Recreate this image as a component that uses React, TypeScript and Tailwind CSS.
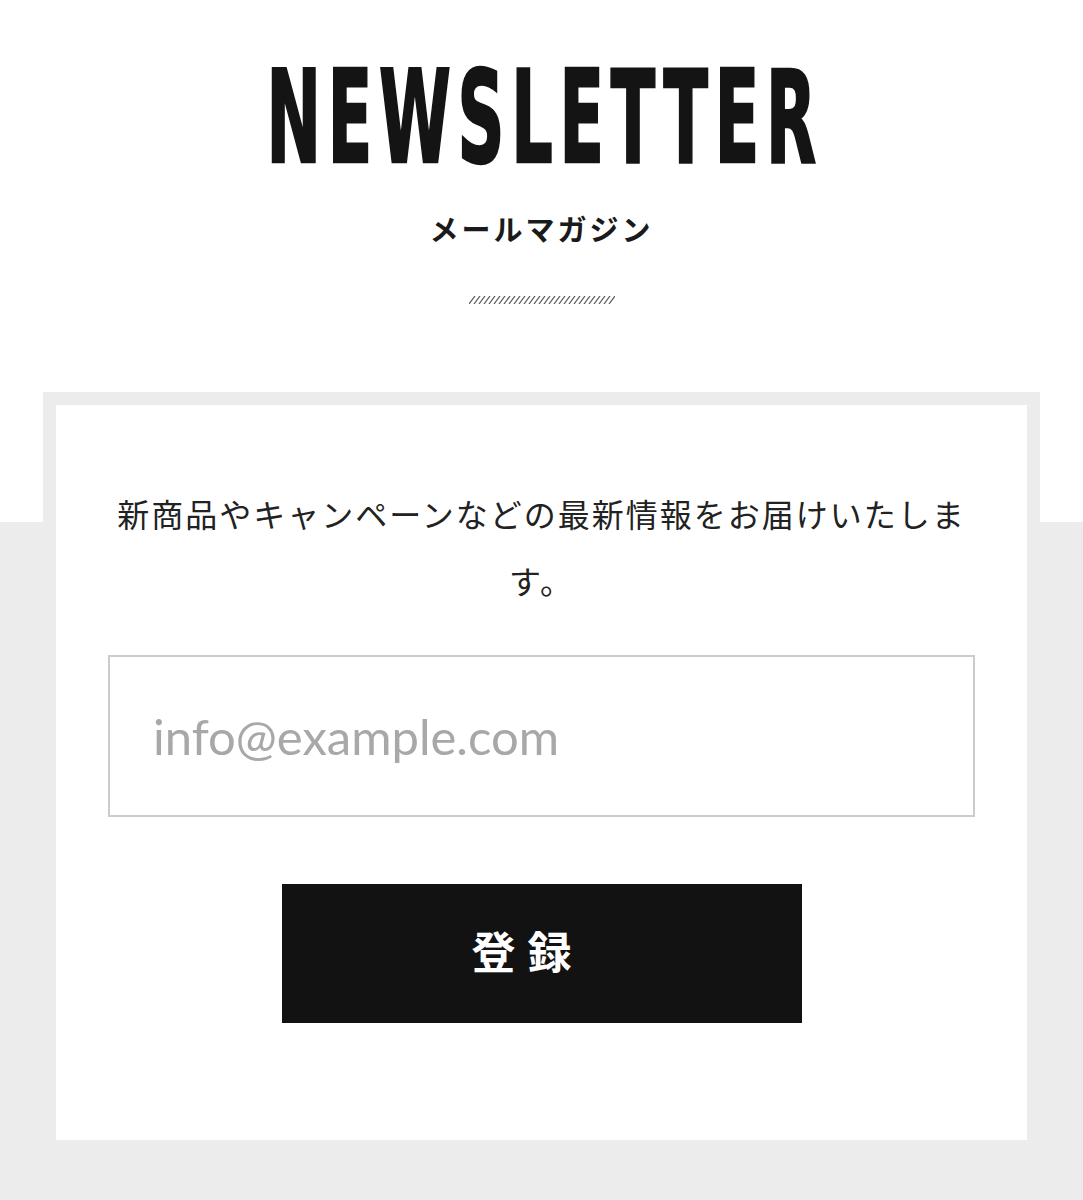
export default function App() {
  const stripes = Array.from({ length: 29 }, (_, i) => i * 5);

  return (
    <div className="min-h-screen bg-[linear-gradient(to_bottom,#ffffff_0,#ffffff_522px,#ececec_522px)] pb-[47px] font-['Noto_Sans_CJK_JP',sans-serif] text-[#1a1a1a]">
      {/* heading */}
      <header className="flex flex-col items-center pt-[54px]">
        <h1 className="origin-center scale-x-[0.565] pl-[12px] font-['DejaVu_Sans_Condensed',sans-serif] text-[128px] font-bold leading-none tracking-[12px] text-[#141414] [-webkit-text-stroke:2.5px_#141414]">
          NEWSLETTER
        </h1>
        <p className="mt-[32px] text-[29px] font-bold leading-[28px] tracking-[3px]">
          メールマガジン
        </p>
        <svg width="146" height="8" viewBox="0 0 146 8" className="mt-[54px]">
          {stripes.map((x) => (
            <line key={x} x1={x} y1={8} x2={x + 6} y2={0} stroke="#555" strokeWidth="1.2" />
          ))}
        </svg>
      </header>

      {/* card */}
      <section className="mx-[43px] mt-[88px] border-[13px] border-[#ececec] bg-white px-[52px] pt-[75px] pb-[117px]">
        <p className="text-center text-[32px] leading-[67px] tracking-[2px] text-[#222]">
          新商品やキャンペーンなどの最新情報をお届けいたします。
        </p>
        <input
          type="email"
          placeholder="info@example.com"
          className="mt-[41px] block h-[162px] w-full border-2 border-[#cccccc] bg-white px-[43px] font-['Lato',sans-serif] text-[49px] text-[#222] outline-none placeholder:text-[#a8a8a8]"
        />
        <div className="mt-[67px] flex justify-center">
          <button className="h-[139px] w-[520px] bg-[#121212] pr-[28px] pb-[8px] text-[44px] font-bold tracking-[12px] text-white">
            登録
          </button>
        </div>
      </section>
    </div>
  );
}
